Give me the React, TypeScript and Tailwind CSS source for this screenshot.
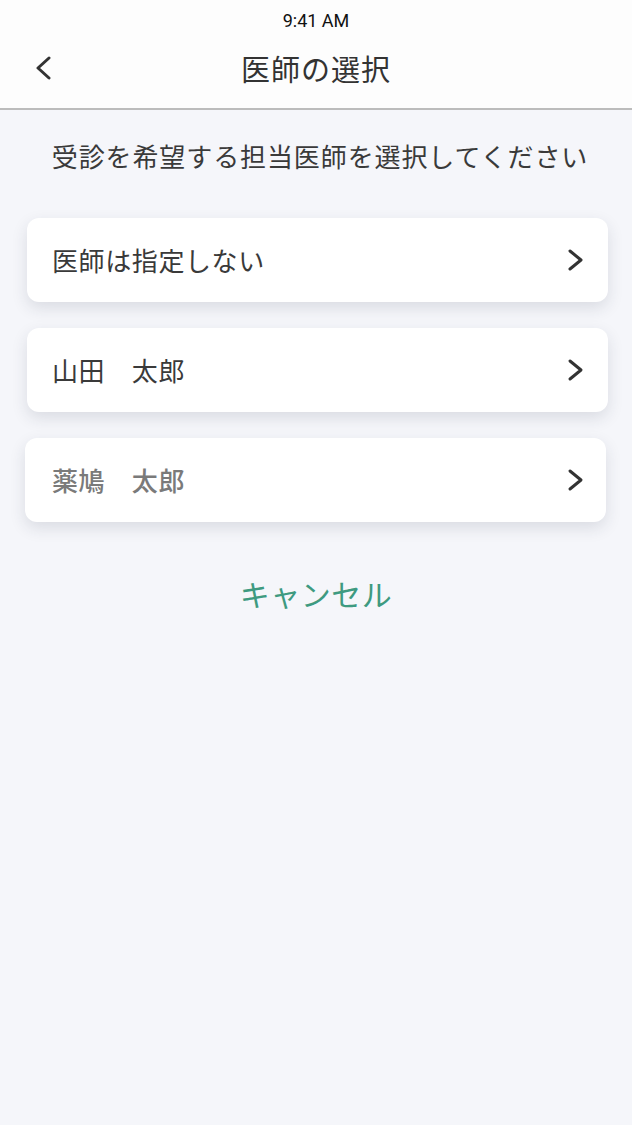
type Doctor = {
  id: number;
  name: string;
  muted?: boolean;
};

const doctors: Doctor[] = [
  { id: 0, name: "医師は指定しない" },
  { id: 1, name: "山田　太郎" },
  { id: 2, name: "薬鳩　太郎", muted: true },
];

const Chevron = ({ left = false }: { left?: boolean }) => (
  <svg
    width="18"
    height="24"
    viewBox="0 0 18 24"
    fill="none"
    stroke="#333333"
    strokeWidth="3"
    strokeLinecap="round"
    strokeLinejoin="round"
  >
    {left ? (
      <polyline points="14,2 3,12 14,22" />
    ) : (
      <polyline points="3,3 14,12 3,21" />
    )}
  </svg>
);

const App = () => {
  return (
    <div className="min-h-[1125px] w-full bg-[#f5f6fa] font-['Noto_Sans_CJK_JP','Noto_Sans',sans-serif] text-[#333333]">
      <header className="bg-[#fdfdfd] border-b-2 border-[#bcbcbc]">
        <div className="h-10 flex items-center justify-center pt-[1px] font-['Roboto',sans-serif] text-[18px] text-[#111111]">
          9:41 AM
        </div>
        <div className="relative h-[68px] flex items-center justify-center">
          <button className="absolute left-[35px] top-[16px]">
            <Chevron left />
          </button>
          <h1 className="text-[29px] leading-none tracking-[1px] pb-[12px]">医師の選択</h1>
        </div>
      </header>

      <p className="mt-[33px] pl-[8px] text-center text-[26px] leading-none tracking-[0.9px] text-[#3a3a3a]">
        受診を希望する担当医師を選択してください
      </p>

      <div className="mt-[49px] flex flex-col gap-[26px]">
        {doctors.map((d) => (
          <div
            key={d.id}
            className={
              d.muted
                ? "ml-[25px] mr-[26px] h-[84px] rounded-[12px] bg-white shadow-[0_6px_16px_rgba(40,45,70,0.13)] flex items-center justify-between pl-[27px] pr-[21px]"
                : "ml-[27px] mr-[24px] h-[84px] rounded-[12px] bg-white shadow-[0_6px_16px_rgba(40,45,70,0.13)] flex items-center justify-between pl-[25px] pr-[23px]"
            }
          >
            <span
              className={
                d.muted
                  ? "text-[26px] leading-none tracking-[0.6px] text-[#7a7a7a] font-medium"
                  : "text-[26px] leading-none tracking-[0.6px] text-[#3a3a3a]"
              }
            >
              {d.name}
            </span>
            <Chevron />
          </div>
        ))}
      </div>

      <div className="mt-[56px] flex justify-center">
        <button className="text-[30px] leading-none tracking-[0.5px] text-[#3e9a80]">
          キャンセル
        </button>
      </div>
    </div>
  );
};

export default App;
